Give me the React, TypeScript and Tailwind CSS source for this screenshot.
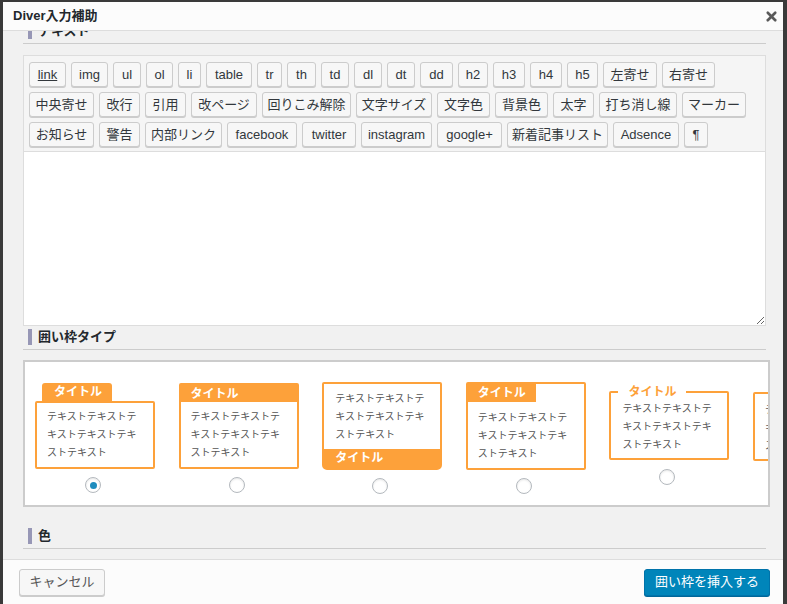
import { X } from "lucide-react";

const toolbar: { label: string; w: number; u?: boolean }[] = [
  { label: "link", w: 37, u: true },
  { label: "img", w: 37 },
  { label: "ul", w: 28 },
  { label: "ol", w: 27 },
  { label: "li", w: 23 },
  { label: "table", w: 46 },
  { label: "tr", w: 25 },
  { label: "th", w: 29 },
  { label: "td", w: 28 },
  { label: "dl", w: 28 },
  { label: "dt", w: 28 },
  { label: "dd", w: 33 },
  { label: "h2", w: 30 },
  { label: "h3", w: 32 },
  { label: "h4", w: 32 },
  { label: "h5", w: 31 },
  { label: "左寄せ", w: 54 },
  { label: "右寄せ", w: 53 },
  { label: "中央寄せ", w: 65 },
  { label: "改行", w: 41 },
  { label: "引用", w: 41 },
  { label: "改ページ", w: 66 },
  { label: "回りこみ解除", w: 89 },
  { label: "文字サイズ", w: 76 },
  { label: "文字色", w: 53 },
  { label: "背景色", w: 53 },
  { label: "太字", w: 41 },
  { label: "打ち消し線", w: 78 },
  { label: "マーカー", w: 64 },
  { label: "お知らせ", w: 65 },
  { label: "警告", w: 41 },
  { label: "内部リンク", w: 77 },
  { label: "facebook", w: 70 },
  { label: "twitter", w: 54 },
  { label: "instagram", w: 71 },
  { label: "google+", w: 65 },
  { label: "新着記事リスト", w: 101 },
  { label: "Adsence", w: 66 },
  { label: "¶", w: 24 },
];

const body = "テキストテキストテキストテキストテキストテキスト";

function Heading({ children }: { children: React.ReactNode }) {
  return (
    <div className="w-[743px] border-b border-[#cccccc] pb-[4px]">
      <span className="ml-[5px] block border-l-4 border-[#9797b6] pl-[6px] text-[13px] font-bold leading-[16px] text-[#23282d]">
        {children}
      </span>
    </div>
  );
}

function Radio({ checked }: { checked?: boolean }) {
  return (
    <span className="mr-[4px] mt-[8px] flex h-[16px] w-[16px] items-center justify-center rounded-full border border-[#b4b9be] bg-white shadow-[inset_0_1px_2px_rgba(0,0,0,0.1)]">
      {checked && <span className="h-[7px] w-[7px] rounded-full bg-[#1e8cbe]" />}
    </span>
  );
}

const txt = "text-[10px] leading-[18px] text-[#555]";
const ttl = "text-[12px] font-bold leading-[18px] text-white";

export default function App() {
  return (
    <div className="flex h-[604px] w-[787px] overflow-hidden bg-[#3a3a3a] font-['Liberation_Sans','Noto_Sans_CJK_JP',sans-serif]">
      <div className="ml-[3px] mt-[2px] flex h-[602px] w-[780px] flex-col bg-[#f1f1f1]">
        {/* header */}
        <div className="flex h-[29px] shrink-0 items-center justify-between border-b border-[#dddddd] bg-[#fcfcfc] pl-[10px] pr-[4px]">
          <span className="text-[13px] font-bold text-[#23282d]">Diver入力補助</span>
          <X size={15} strokeWidth={4.2} className="text-[#5a5a5a]" />
        </div>

        {/* body */}
        <div className="flex-1 overflow-hidden pl-[20px]">
          <div className="mt-[-8px]">
            <Heading>テキスト</Heading>
          </div>

          <div className="mt-[11px] w-[743px] border border-[#dddddd]">
            <div className="flex flex-wrap gap-x-[5px] gap-y-[5px] border-b border-[#dddddd] bg-[#f5f5f5] pb-[4px] pl-[5px] pt-[6px]">
              {toolbar.map((b) => (
                <span
                  key={b.label}
                  style={{ width: b.w }}
                  className={`flex h-[25px] items-center justify-center rounded-[3px] border border-[#cccccc] bg-[#f7f7f7] text-[13px] text-[#32373c] shadow-[0_1px_0_#cccccc] ${b.u ? "underline" : ""}`}
                >
                  {b.label}
                </span>
              ))}
            </div>
            <textarea className="block h-[173px] w-full resize-y bg-white outline-none" />
          </div>

          <div className="mt-[3px]">
            <Heading>囲い枠タイプ</Heading>
          </div>

          <div className="mt-[10px] flex h-[147px] w-[747px] items-center gap-[23.6px] overflow-hidden border-2 border-[#cccccc] bg-white pb-[11px] pl-[10px] pt-[20px]">
            {/* 1: tab on top */}
            <div className="flex w-[120px] shrink-0 flex-col items-center">
              <div className="w-full">
                <div className={`ml-[7px] h-[18px] w-[70px] rounded-t-[3px] bg-[#fda13a] pl-[12px] ${ttl}`}>タイトル</div>
                <div className={`rounded-[2px] border-2 border-[#fda13a] px-[10px] py-[5px] ${txt}`}>{body}</div>
              </div>
              <Radio checked />
            </div>

            {/* 2: header bar */}
            <div className="flex w-[120px] shrink-0 flex-col items-center">
              <div className="w-full rounded-[2px] border-2 border-[#fda13a]">
                <div className={`h-[17px] bg-[#fda13a] pl-[10px] ${ttl} leading-[16px]`}>タイトル</div>
                <div className={`px-[10px] pb-[5px] pt-[6px] ${txt}`}>{body}</div>
              </div>
              <Radio />
            </div>

            {/* 3: footer band */}
            <div className="flex w-[120px] shrink-0 flex-col items-center">
              <div className="w-full rounded-b-[5px] rounded-t-[2px] border-2 border-[#fda13a]">
                <div className={`px-[11px] pb-[5px] pt-[6px] ${txt}`}>{body}</div>
                <div className={`h-[19px] bg-[#fda13a] pl-[11px] ${ttl}`}>タイトル</div>
              </div>
              <Radio />
            </div>

            {/* 4: square tab inside */}
            <div className="flex w-[120px] shrink-0 flex-col items-center">
              <div className="w-full rounded-[2px] border-2 border-[#fda13a]">
                <div className={`h-[18px] w-[68px] bg-[#fda13a] pl-[10px] ${ttl}`}>タイトル</div>
                <div className={`px-[10px] pb-[5px] pt-[7px] ${txt}`}>{body}</div>
              </div>
              <Radio />
            </div>

            {/* 5: title on the border */}
            <div className="flex w-[120px] shrink-0 flex-col items-center">
              <div className="relative w-full rounded-[2px] border-2 border-[#fda13a]">
                <span className="absolute left-[7px] top-[-10px] bg-white px-[10px] text-[12px] font-bold leading-[18px] text-[#fda13a]">
                  タイトル
                </span>
                <div className={`px-[11px] pb-[4px] pt-[7px] ${txt}`}>{body}</div>
              </div>
              <span className="mt-[1px]">
                <Radio />
              </span>
            </div>

            {/* 6: clipped by the frame */}
            <div className="flex w-[120px] shrink-0 flex-col items-center">
              <div className="w-full rounded-[2px] border-2 border-[#fda13a]">
                <div className={`px-[10px] pb-[4px] pt-[7px] ${txt}`}>{body}</div>
              </div>
              <Radio />
            </div>
          </div>

          <div className="mt-[21px]">
            <Heading>色</Heading>
          </div>
        </div>

        {/* footer */}
        <div className="flex h-[45px] shrink-0 items-center justify-between border-t border-[#dddddd] bg-[#fcfcfc] pl-[16px] pr-[13px]">
          <span className="flex h-[27px] w-[86px] items-center justify-center rounded-[3px] border border-[#cccccc] bg-[#f7f7f7] text-[13px] text-[#555] shadow-[0_1px_0_#cccccc]">
            キャンセル
          </span>
          <span className="flex h-[27px] w-[126px] items-center justify-center rounded-[3px] border border-[#0073aa] bg-[#0085ba] text-[13px] text-white shadow-[0_1px_0_#006799]">
            囲い枠を挿入する
          </span>
        </div>
      </div>
    </div>
  );
}
